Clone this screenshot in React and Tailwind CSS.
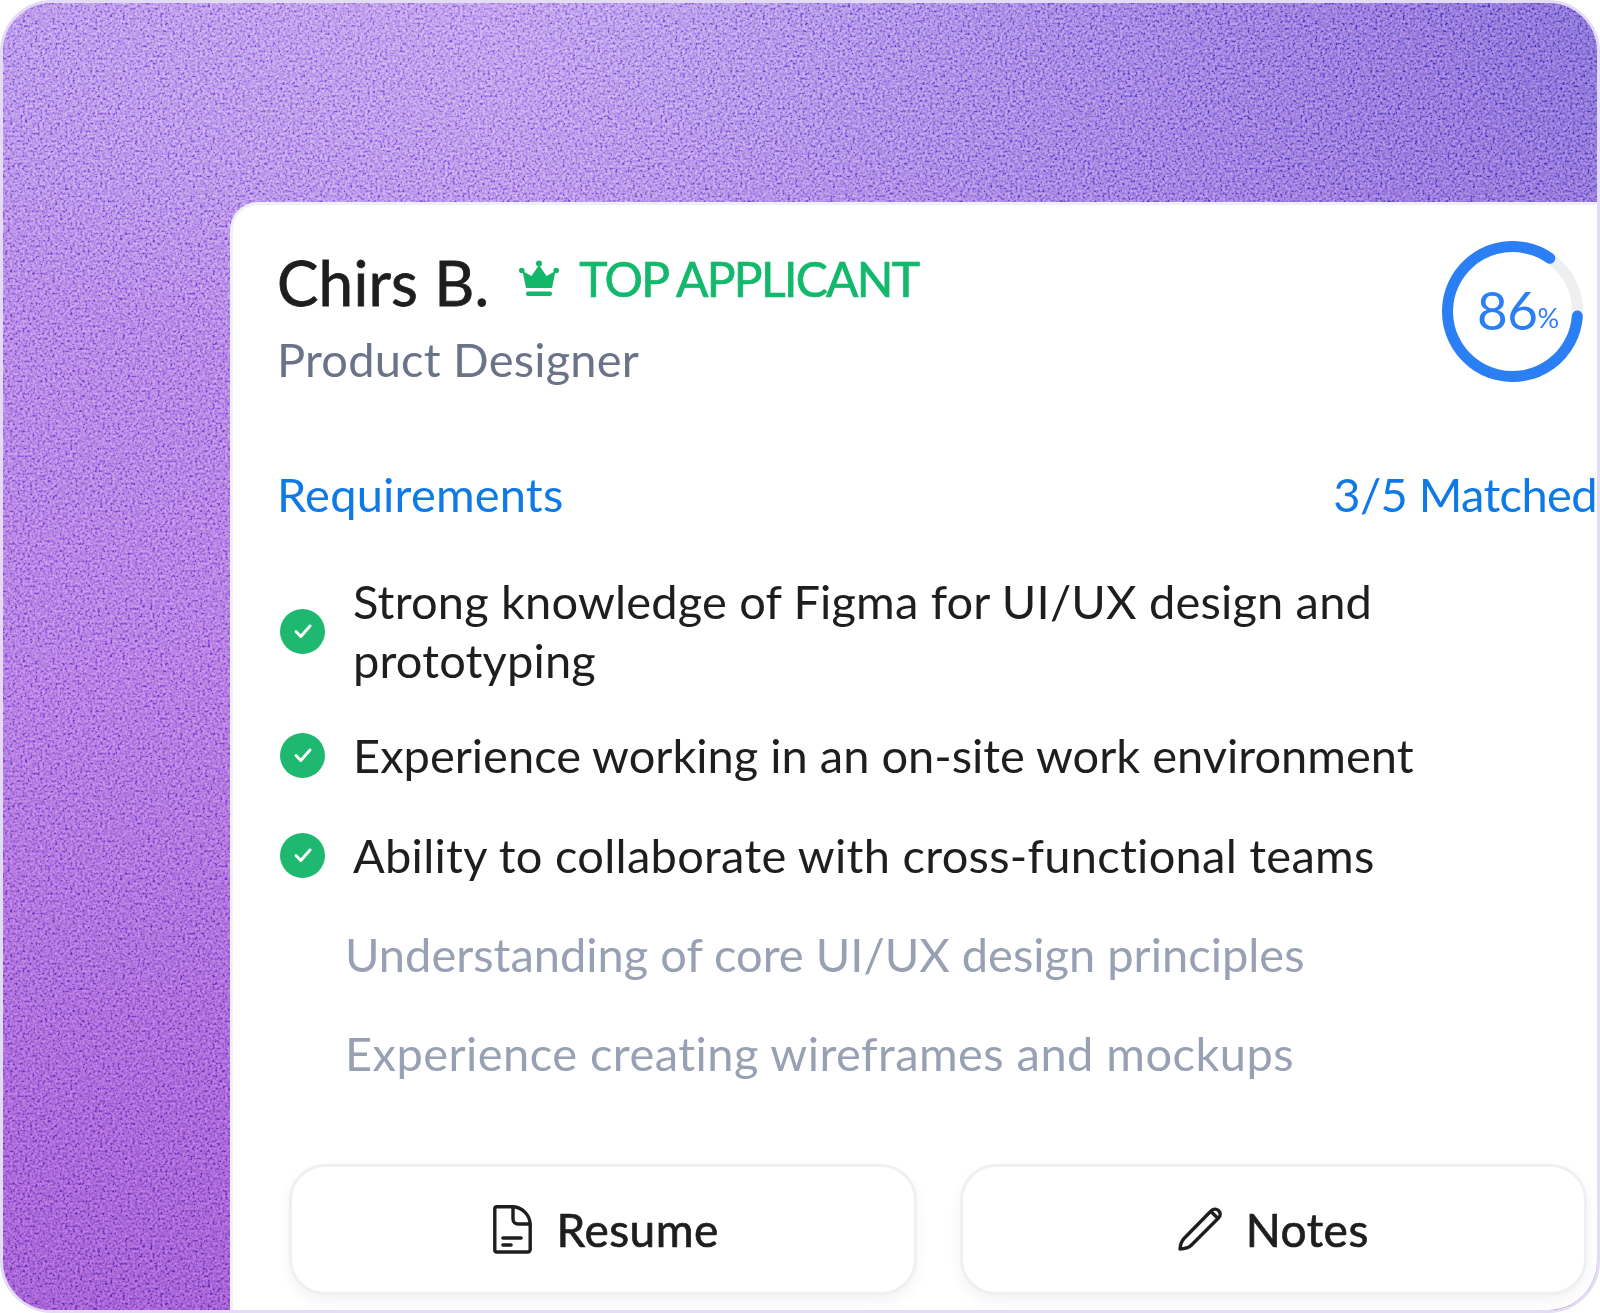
const FONT = "font-['Lato','Inter',sans-serif] [font-variant-ligatures:none]";

function Crown() {
  return (
    <svg width="40" height="40" viewBox="0 0 40 40" className="shrink-0" aria-hidden="true">
      <g fill="#12b76a">
        <circle cx="20" cy="4.5" r="3" />
        <circle cx="2.8" cy="11.5" r="2.8" />
        <circle cx="37.2" cy="11.5" r="2.8" />
        <path d="M20 6 L27.5 17 L36.5 12 L33 29 L7 29 L3.5 12 L12.5 17 Z" />
        <rect x="7" y="32.5" width="26" height="4.5" rx="2" />
      </g>
    </svg>
  );
}

function Ring() {
  const r = 65;
  const c = 70.5;
  const pt = (deg) => {
    const a = ((deg - 90) * Math.PI) / 180;
    return [c + r * Math.cos(a), c + r * Math.sin(a)];
  };
  const [sx, sy] = pt(94);
  const [ex, ey] = pt(35);
  return (
    <div className="relative w-[141px] h-[141px] shrink-0">
      <svg width="141" height="141" viewBox="0 0 141 141" aria-hidden="true">
        <circle cx={c} cy={c} r={r} fill="none" stroke="#eeeff1" strokeWidth="11" />
        <path
          d={`M${sx} ${sy} A${r} ${r} 0 1 1 ${ex} ${ey}`}
          fill="none"
          stroke="#2b7ff5"
          strokeWidth="11"
          strokeLinecap="round"
        />
      </svg>
      <div className="absolute inset-0 flex items-center justify-center pl-[11px] pb-[5px] text-[#2b7ff5] leading-none">
        <span className="text-[53px] tracking-[-0.5px]">86</span>
        <span className="text-[27px] mt-[16px]">%</span>
      </div>
    </div>
  );
}

function Tick() {
  return (
    <span className="flex items-center justify-center w-[45px] h-[45px] rounded-full bg-[#1fb870] shrink-0">
      <svg width="20" height="20" viewBox="0 0 20 20" fill="none" aria-hidden="true">
        <path d="M3 10.5 L7.8 15.5 L17 5" stroke="#fff" strokeWidth="3" strokeLinecap="round" strokeLinejoin="round" />
      </svg>
    </span>
  );
}

function Met({ children, cls = "" }) {
  return (
    <li className={`flex items-center gap-[28px] pl-[3px] text-[#1e1e1e] ${cls}`}>
      <Tick />
      <span className="min-w-0">{children}</span>
    </li>
  );
}

function DocIcon() {
  return (
    <svg width="39" height="49" viewBox="0 0 39 49" fill="none" stroke="#1e1e1e" strokeWidth="3.4" strokeLinejoin="round" strokeLinecap="round" aria-hidden="true">
      <path d="M3.5 1.8 H19 C29 1.8 37.2 10 37.2 20 V44.5 A2.5 2.5 0 0 1 34.7 47 H3.5 A2 2 0 0 1 1.8 45 V3.7 A2 2 0 0 1 3.5 1.8 Z" />
      <path d="M20 2 V14 A5 5 0 0 0 25 19 H37" />
      <path d="M10 33 H28" strokeWidth="3.6" />
      <path d="M10 40 H18" strokeWidth="3.6" />
    </svg>
  );
}

function PencilIcon() {
  return (
    <svg width="44" height="44" viewBox="0 0 44 44" fill="none" stroke="#1e1e1e" strokeWidth="3.4" strokeLinejoin="round" strokeLinecap="round" aria-hidden="true">
      <path d="M2 42 C2.5 37 3.5 34 6 31.5 L33 4 C35 2 38 1.5 40.5 3.5 C42.8 5.8 42.5 9 40.5 11 L13 38.5 C10.5 41 7 41.8 2 42 Z" />
      <path d="M33.5 5 L39.5 11" />
    </svg>
  );
}

function Btn({ icon, label, gap, cls = "" }) {
  return (
    <div className="flex-1 min-w-0 h-[131px] flex items-center justify-center rounded-[36px] border-[3px] border-[#eef0f2] bg-white shadow-[0_6px_14px_rgba(16,24,40,0.05)] text-[46px] tracking-[0.5px] [-webkit-text-stroke:0.7px_#1e1e1e] text-[#1e1e1e]">
      <div className={`flex items-center ${gap} ${cls}`}>
        {icon}
        <span>{label}</span>
      </div>
    </div>
  );
}

export default function App() {
  return (
    <div className={`relative w-[1600px] h-[1313px] bg-white ${FONT}`}>
      <div className="relative w-full h-full overflow-hidden rounded-[52px] border-[3px] border-[#e4dcf4] bg-[linear-gradient(170deg,#a67ce4_0%,#a56cde_42%,#9658d0_72%,#8a4cc6_100%)]">
        <div className="absolute inset-0 bg-[radial-gradient(ellipse_900px_380px_at_38%_0%,rgba(185,150,238,0.7)_0%,rgba(185,150,238,0)_100%)]" />
        <div className="absolute inset-0 bg-[radial-gradient(circle_at_104%_0%,#7462cf_0%,rgba(125,105,215,0.6)_25%,rgba(160,130,230,0)_55%)]" />
        <svg className="absolute inset-0 w-full h-full mix-blend-overlay" aria-hidden="true">
          <filter id="grain2" x="0" y="0" width="100%" height="100%">
            <feTurbulence type="fractalNoise" baseFrequency="0.4" numOctaves="2" seed="9" />
            <feColorMatrix type="saturate" values="0" />
            <feComponentTransfer>
              <feFuncR type="linear" slope="2.8" intercept="-0.9" />
              <feFuncG type="linear" slope="2.8" intercept="-0.9" />
              <feFuncB type="linear" slope="2.8" intercept="-0.9" />
              <feFuncA type="discrete" tableValues="1" />
            </feComponentTransfer>
          </filter>
          <rect width="100%" height="100%" filter="url(#grain2)" opacity="0.45" />
        </svg>

        <div className="relative h-full pt-[199px] pl-[227px]">
          <div className="h-full bg-white rounded-tl-[28px] border-t-[3px] border-l-[3px] border-[#eef0f8] pt-[30px] pl-[44px] overflow-hidden">
            <div className="flex items-start justify-between pr-[14px]">
              <div>
                <div className="flex items-center h-[94px]">
                  <span className="text-[62px] tracking-[0.2px] [-webkit-text-stroke:0.8px_#1e1e1e] leading-none text-[#1e1e1e]">Chirs B.</span>
                  <span className="ml-[30px] -mt-[6px] flex items-center gap-[20px]">
                    <Crown />
                    <span className="text-[48px] tracking-[-1.7px] [-webkit-text-stroke:0.7px_#14b86c] leading-none text-[#14b86c]">TOP APPLICANT</span>
                  </span>
                </div>
                <div className="text-[47px] tracking-[0.2px] leading-[60px] text-[#6b7388]">Product Designer</div>
              </div>
              <div className="mt-[6px]"><Ring /></div>
            </div>

            <div className="flex items-center justify-between mt-[75px] text-[47px] leading-[60px] text-[#0f7ae5]">
              <span className="tracking-[0.2px]">Requirements</span>
              <span className="whitespace-nowrap tracking-[-0.6px]">3/5 Matched</span>
            </div>

            <ul className="mt-[47.5px] text-[47px] leading-[59.5px] flex flex-col pr-[150px]">
              <Met cls="tracking-[0.17px]">Strong knowledge of Figma for UI/UX design and prototyping</Met>
              <Met cls="mt-[35px]">Experience working in an on-site work environment</Met>
              <Met cls="mt-[40.5px] tracking-[0.27px]">Ability to collaborate with cross-functional teams</Met>
              <li className="mt-[39.5px] pl-[68px] text-[#98a1b3]">Understanding of core UI/UX design principles</li>
              <li className="mt-[40px] pl-[68px] tracking-[0.45px] text-[#98a1b3]">Experience creating wireframes and mockups</li>
            </ul>

            <div className="flex gap-[43px] mt-[80px] ml-[12px] mr-[10px]">
              <Btn icon={<DocIcon />} label="Resume" gap="gap-[25px]" cls="pl-[6px]" />
              <Btn icon={<PencilIcon />} label="Notes" gap="gap-[24px]" />
            </div>
          </div>
        </div>
      </div>
    </div>
  );
}
